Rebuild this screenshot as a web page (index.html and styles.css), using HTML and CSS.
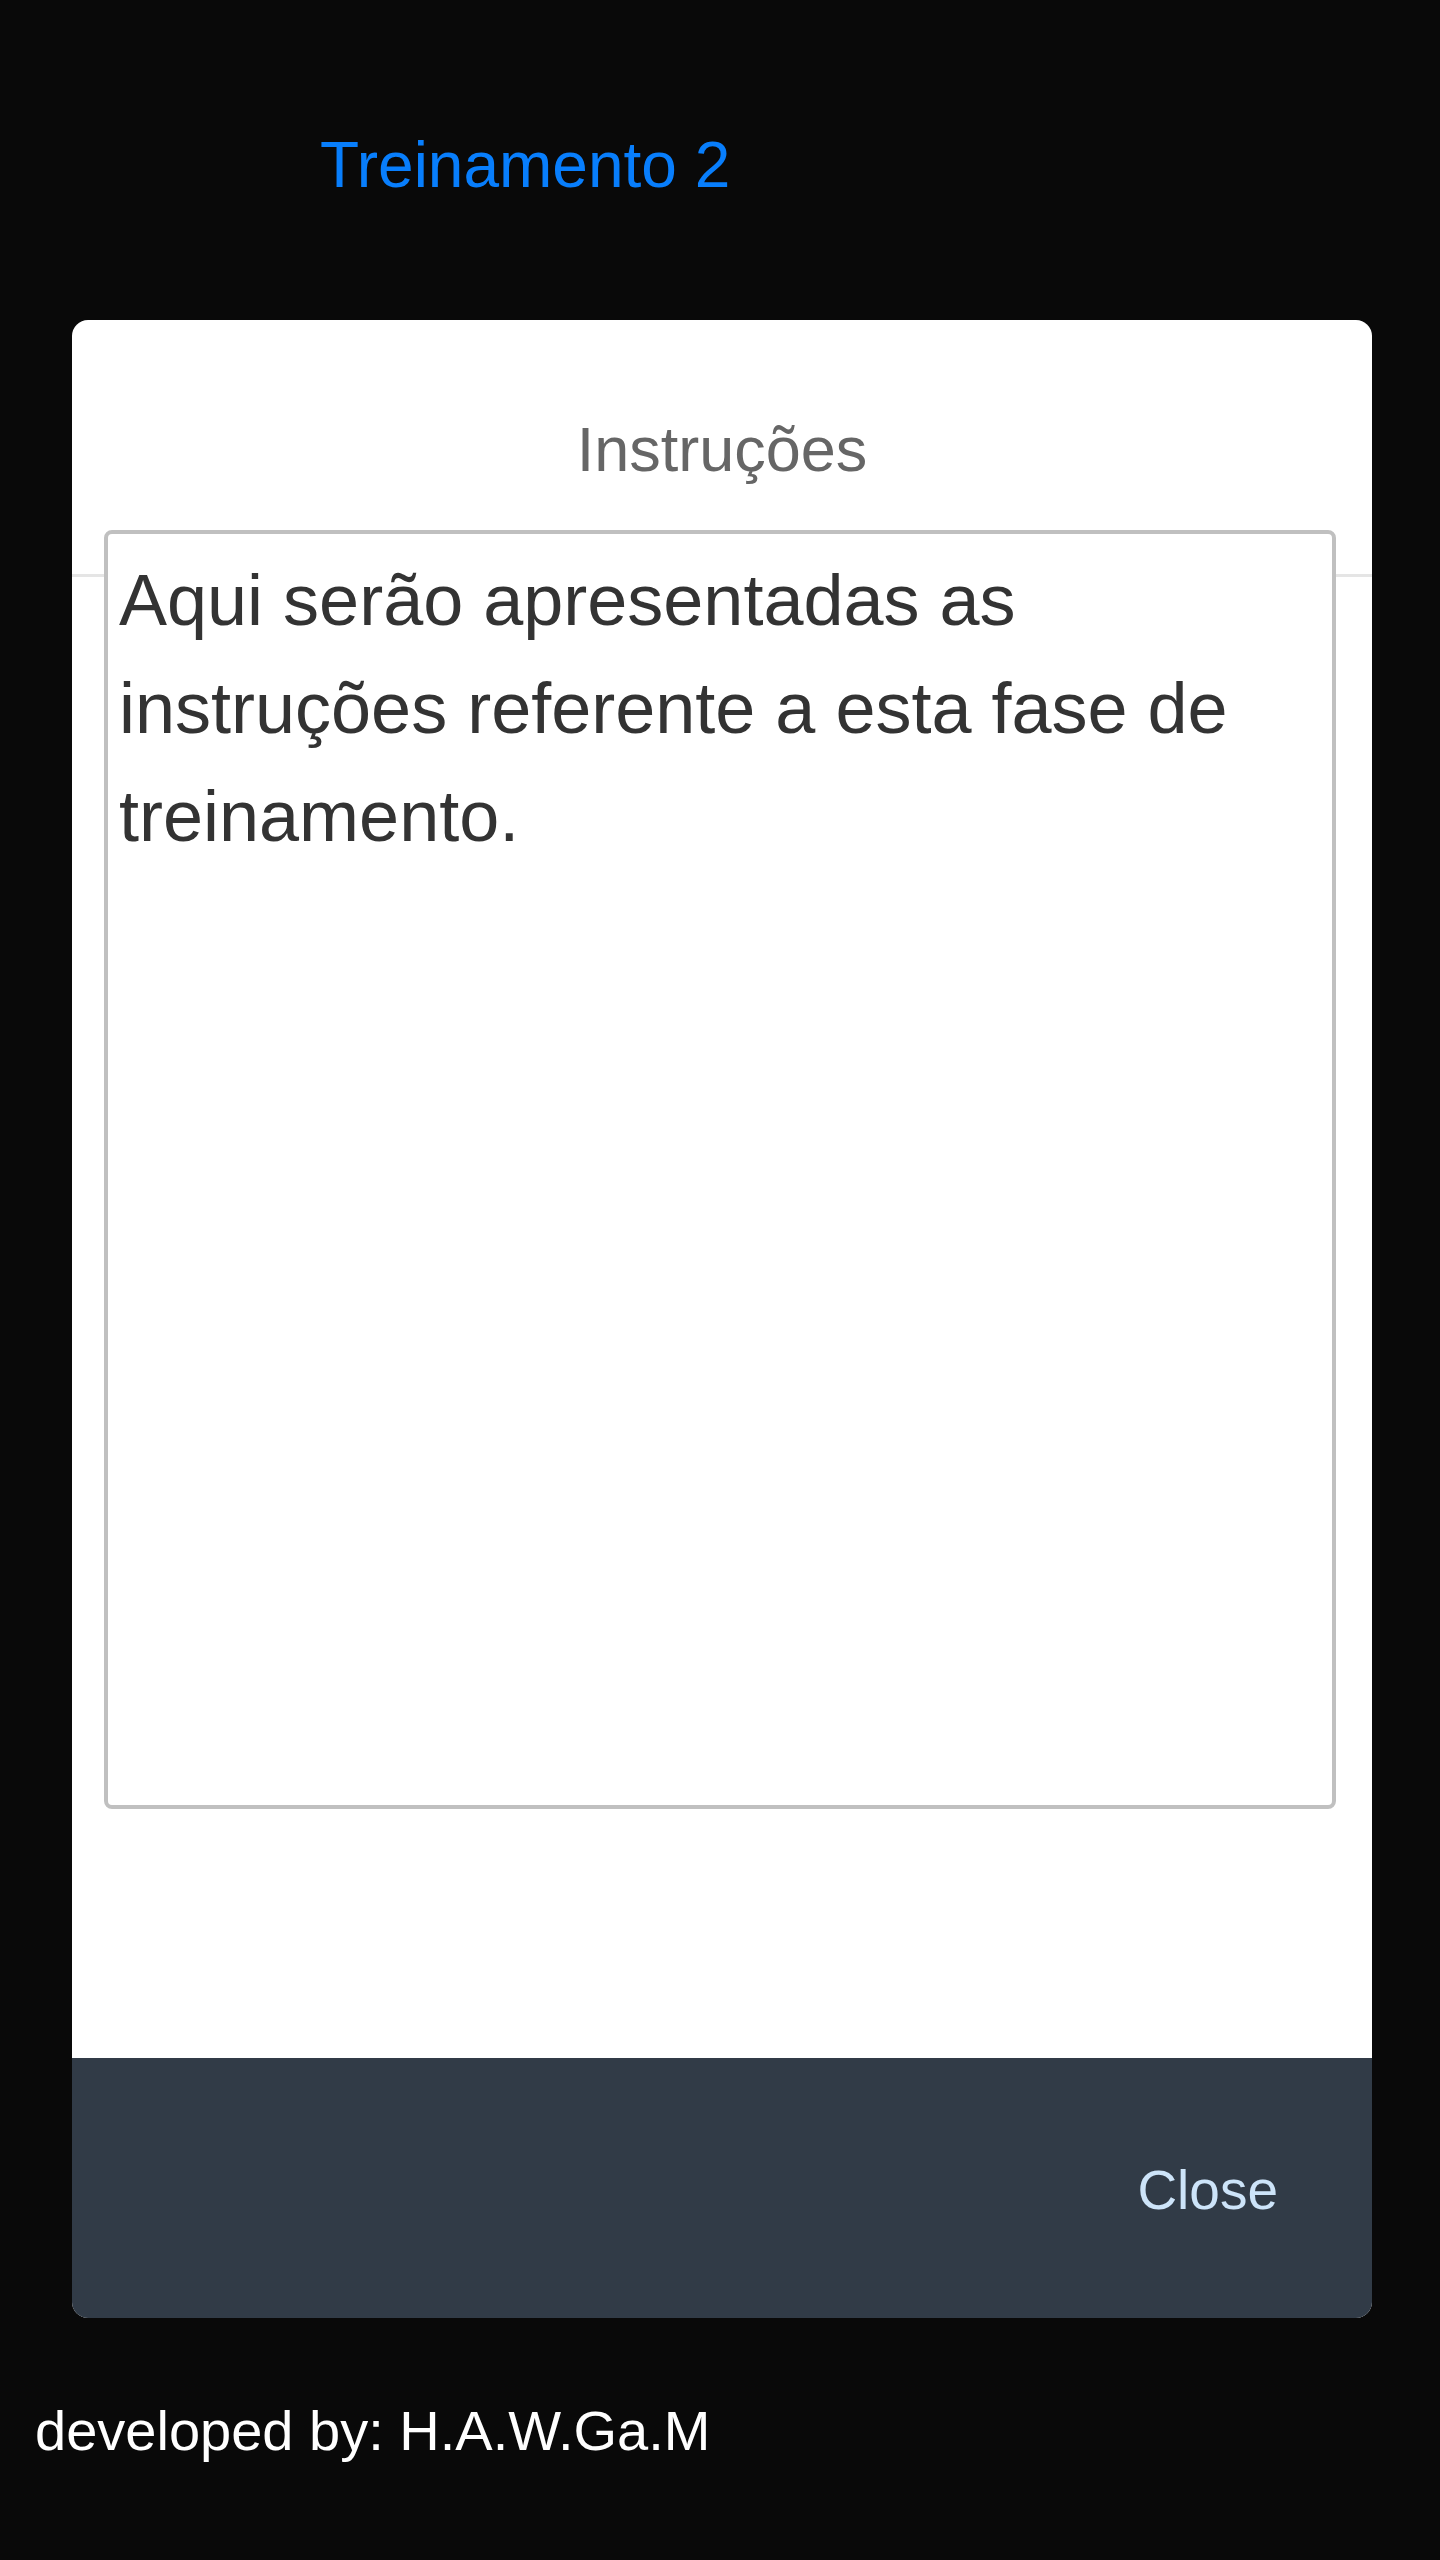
FILE: index.html
```html
<!DOCTYPE html>
<html lang="pt-BR">
<head>
<meta charset="utf-8">
<title>Treinamento 2</title>
<link rel="stylesheet" href="styles.css">
</head>
<body>
  <h1 class="page-title">Treinamento 2</h1>
  <div class="modal">
    <div class="modal-header">
      <h2 class="modal-title">Instruções</h2>
    </div>
    <div class="modal-body">
      <div class="instructions">Aqui serão apresentadas as instruções referente a esta fase de treinamento.</div>
    </div>
    <div class="modal-footer">
      <span class="close-btn">Close</span>
    </div>
  </div>
  <p class="credits">developed by: H.A.W.Ga.M</p>
</body>
</html>
```

FILE: styles.css
```css
html, body {
  margin: 0;
  padding: 0;
}

body {
  background: #090909;
  font-family: "Liberation Sans", Arial, sans-serif;
  min-height: 2560px;
}

.page-title {
  margin: 0;
  padding: 129px 0 0 320px;
  font-size: 64px;
  line-height: 72px;
  font-weight: normal;
  color: #087efc;
}

.modal {
  margin: 119px 0 0 72px;
  width: 1300px;
  background: #ffffff;
  border-radius: 16px;
  overflow: hidden;
  display: flex;
  flex-direction: column;
}

.modal-header {
  height: 257px;
  box-sizing: border-box;
  padding-top: 93px;
  border-bottom: 3px solid #e5e5e5;
}

.modal-title {
  margin: 0;
  text-align: center;
  font-size: 63px;
  line-height: 72px;
  font-weight: normal;
  color: #666666;
}

.modal-body {
  padding: 0 36px 249px 32px;
}

.instructions {
  margin-top: -47px;
  height: 1279px;
  box-sizing: border-box;
  border: 4px solid #c0c0c0;
  border-radius: 8px;
  background: #ffffff;
  padding: 12px 10px 12px 11px;
  font-size: 72px;
  line-height: 108px;
  color: #333333;
  position: relative;
}

.modal-footer {
  height: 260px;
  background: #313b47;
  display: flex;
  align-items: center;
  justify-content: flex-end;
  padding: 3px 94px 0 0;
  box-sizing: border-box;
}

.close-btn {
  font-size: 55px;
  color: #cde4f9;
}

.credits {
  margin: 81px 0 0 0;
  padding-left: 35px;
  font-size: 56px;
  line-height: 64px;
  color: #ffffff;
}
```
